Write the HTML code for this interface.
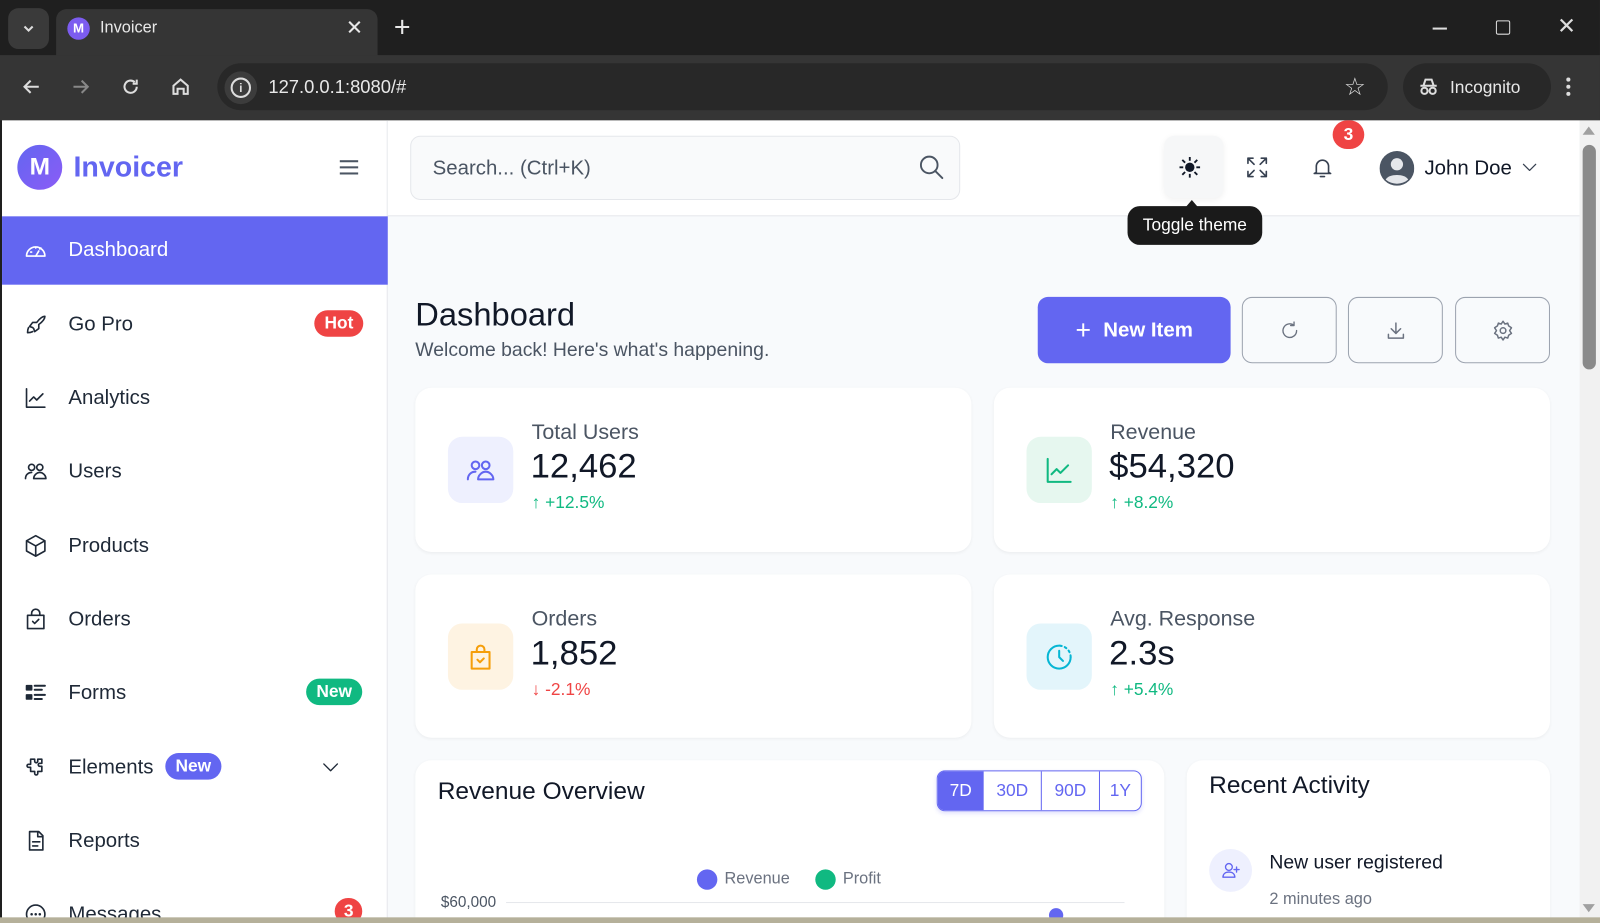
<!DOCTYPE html>
<html><head><meta charset="utf-8">
<style>
*{box-sizing:border-box;margin:0;padding:0}
html,body{width:1600px;height:919px;overflow:hidden;background:#f8fafc;font-family:"Liberation Sans",sans-serif}
#w{position:absolute;left:0;top:0;width:1568px;height:905px;transform:scale(1.0204);transform-origin:0 0;background:#1f1f1f;overflow:hidden}
.a{position:absolute}
.ic{stroke:currentColor;fill:none;stroke-width:1.6;stroke-linecap:round;stroke-linejoin:round}
.nav{position:absolute;left:2px;width:378px;height:60px;display:flex;align-items:center;font-size:20px;color:#1f2937}
.nav svg{position:absolute;left:21px;width:24px;height:24px}
.nav span.t{position:absolute;left:65px}
.badge{position:absolute;border-radius:14px;color:#fff;font-weight:bold;font-size:17px;padding:3px 10px}
.card{position:absolute;background:#fff;border-radius:16px;box-shadow:0 1px 3px rgba(0,0,0,.05)}
.ibox{position:absolute;left:32px;top:48px;width:64px;height:65px;border-radius:14px;display:flex;align-items:center;justify-content:center}
.lbl{position:absolute;left:114px;top:32px;font-size:21px;color:#4b5563}
.val{position:absolute;left:113px;top:58px;font-size:34px;color:#111827}
.chg{position:absolute;left:114px;top:103px;font-size:17px}
.ob{position:absolute;top:291px;width:93px;height:65px;border:1px solid #9ca3af;border-radius:10px;display:flex;align-items:center;justify-content:center;color:#6b7280}
</style></head><body><div id="w">
<div class="a" style="left:8px;top:8px;width:40px;height:40px;border-radius:10px;background:#3a3a3a"></div>
<svg class="a" style="left:20px;top:20px" width="16" height="16" viewBox="0 0 16 16"><path d="M4 6l4 4 4-4" stroke="#ddd" stroke-width="2" fill="none"/></svg>
<div class="a" style="left:55px;top:9px;width:315px;height:50px;background:#353535;border-radius:10px 10px 0 0"></div>
<div class="a" style="left:66px;top:17px;width:22px;height:22px;border-radius:50%;background:#7c5cf0;color:#fff;font-size:13px;font-weight:bold;text-align:center;line-height:22px">M</div>
<div class="a" style="left:98px;top:19px;color:#e8e8e8;font-size:16px">Invoicer</div>
<div class="a" style="left:339px;top:15px;color:#e8e8e8;font-size:20px">✕</div>
<div class="a" style="left:386px;top:11px;color:#e8e8e8;font-size:28px">+</div>
<div class="a" style="left:1404px;top:27px;width:14px;height:1.5px;background:#ddd"></div>
<div class="a" style="left:1466px;top:20px;width:14px;height:14px;border:1.5px solid #ddd;border-radius:2px"></div>
<div class="a" style="left:1526px;top:13px;color:#ddd;font-size:22px">✕</div>
<div class="a" style="left:0;top:54px;width:1568px;height:64px;background:#353535"></div>
<svg class="a" style="left:20px;top:74px" width="22" height="22" viewBox="0 0 22 22"><path d="M18 11H4M10 5l-6 6 6 6" stroke="#ddd" stroke-width="2" fill="none"/></svg>
<svg class="a" style="left:68px;top:74px" width="22" height="22" viewBox="0 0 22 22"><path d="M4 11h14M12 5l6 6-6 6" stroke="#888" stroke-width="2" fill="none"/></svg>
<svg class="a" style="left:117px;top:74px" width="22" height="22" viewBox="0 0 22 22"><path d="M17 11a6 6 0 1 1-2-4.5M17 4v4h-4" stroke="#ddd" stroke-width="2" fill="none"/></svg>
<svg class="a" style="left:166px;top:74px" width="22" height="22" viewBox="0 0 22 22"><path d="M4 10l7-6 7 6v8h-4v-5h-6v5H4z" stroke="#ddd" stroke-width="2" fill="none"/></svg>
<div class="a" style="left:213px;top:62px;width:1147px;height:46px;border-radius:23px;background:#282828"></div>
<div class="a" style="left:220px;top:70px;width:32px;height:32px;border-radius:50%;background:#3c3c3c"></div>
<div class="a" style="left:226px;top:76px;width:20px;height:20px;border-radius:50%;border:2px solid #ddd;color:#ddd;font-size:12px;font-weight:bold;text-align:center;line-height:16px">i</div>
<div class="a" style="left:263px;top:75px;color:#e8e8e8;font-size:18px">127.0.0.1:8080/#</div>
<div class="a" style="left:1317px;top:71px;color:#ddd;font-size:24px">☆</div>
<div class="a" style="left:1375px;top:62px;width:145px;height:46px;border-radius:23px;background:#282828"></div>
<svg class="a" style="left:1389px;top:74px" width="22" height="22" viewBox="0 0 22 22"><path d="M3 10h16M6 10l2-6h6l2 6" stroke="#ddd" stroke-width="2" fill="none"/><circle cx="7" cy="15" r="3" stroke="#ddd" stroke-width="2" fill="none"/><circle cx="15" cy="15" r="3" stroke="#ddd" stroke-width="2" fill="none"/></svg>
<div class="a" style="left:1421px;top:76px;color:#e8e8e8;font-size:17px">Incognito</div>
<div class="a" style="left:1535px;top:76px;width:4px;height:4px;background:#ddd;border-radius:2px;box-shadow:0 7px #ddd,0 14px #ddd"></div>
<div class="a" style="left:2px;top:118px;width:1566px;height:787px;background:#f8fafc"></div>
<div class="a" style="left:2px;top:118px;width:378px;height:787px;background:#fff;border-right:1px solid #e5e7eb"></div>
<div class="a" style="left:380px;top:118px;width:1168px;height:94px;background:#fff;border-bottom:1px solid #e5e7eb"></div>
<div class="a" style="left:1548px;top:118px;width:20px;height:787px;background:#f1f1f1"></div>
<div class="a" style="left:1551px;top:142px;width:13px;height:220px;background:#8a8a8a;border-radius:7px"></div>
<div class="a" style="left:1551px;top:124px;width:0;height:0;border:6px solid transparent;border-bottom:8px solid #a0a0a0;border-top:0"></div>
<div class="a" style="left:1551px;top:886px;width:0;height:0;border:6px solid transparent;border-top:8px solid #a0a0a0;border-bottom:0"></div>
<div class="a" style="left:17px;top:142px;width:44px;height:44px;border-radius:50%;background:linear-gradient(135deg,#6366f1,#8b5cf6);color:#fff;font-size:24px;font-weight:bold;text-align:center;line-height:44px">M</div>
<div class="a" style="left:72px;top:148px;font-size:28px;font-weight:bold;color:#6366f1">Invoicer</div>
<div class="a" style="left:333px;top:157px;width:18px;height:2px;background:#4b5563;box-shadow:0 6px #4b5563,0 12px #4b5563"></div>
<div class="nav" style="top:212px;height:67px;background:#6366f1;color:#fff"><svg class="ic" viewBox="0 0 24 24"><path d="M3 17a9 9 0 1 1 18 0zM12 17l3-5M7 13h1M12 8v1M16 10l1-1"/></svg><span class="t">Dashboard</span></div>
<div class="nav" style="top:288px"><svg class="ic" viewBox="0 0 24 24"><path d="M5 15c-1 2-1 4-1 5 1 0 3 0 5-1M9 15l-3-1 3-4h4c3-4 6-6 8-6 0 2-2 5-6 8v4l-4 3-1-3z"/></svg><span class="t">Go Pro</span><span class="badge" style="left:306px;top:16px;background:#ef4444">Hot</span></div>
<div class="nav" style="top:360px"><svg class="ic" viewBox="0 0 24 24"><path d="M3 3v18h18M6 15l4-4 3 3 6-6"/></svg><span class="t">Analytics</span></div>
<div class="nav" style="top:432px"><svg class="ic" viewBox="0 0 24 24"><circle cx="8" cy="8" r="3"/><circle cx="16" cy="8" r="3"/><path d="M2 19c0-4 3-6 6-6M10 19c0-3 3-6 6-6s6 3 6 6z"/></svg><span class="t">Users</span></div>
<div class="nav" style="top:505px"><svg class="ic" viewBox="0 0 24 24"><path d="M12 2l9 5v10l-9 5-9-5V7zM3 7l9 5 9-5M12 12v10"/></svg><span class="t">Products</span></div>
<div class="nav" style="top:577px"><svg class="ic" viewBox="0 0 24 24"><path d="M4 8h16v13H4zM8 8V6a4 4 0 0 1 8 0v2M9 14l2 2 4-4"/></svg><span class="t">Orders</span></div>
<div class="nav" style="top:649px"><svg class="ic" viewBox="0 0 24 24"><rect x="3" y="5" width="5" height="4" fill="#1f2937"/><rect x="3" y="14" width="5" height="4" fill="#1f2937"/><path d="M11 5h10M11 9h7M11 14h10M11 18h7" stroke-width="2"/></svg><span class="t">Forms</span><span class="badge" style="left:298px;top:16px;background:#10b981">New</span></div>
<div class="nav" style="top:722px"><svg class="ic" viewBox="0 0 24 24"><path d="M8 4h3v2a1.5 1.5 0 0 0 3 0V4h4v4h-2a1.5 1.5 0 0 0 0 3h2v5h-4v2a1.5 1.5 0 0 1-3 0v-2H7v-4H5a1.5 1.5 0 0 1 0-3h2V4z"/></svg><span class="t">Elements</span><span class="badge" style="left:160px;top:16px;background:#6366f1">New</span><svg class="ic" style="left:312px;width:20px" viewBox="0 0 24 24"><path d="M4 8l8 8 8-8"/></svg></div>
<div class="nav" style="top:794px"><svg class="ic" viewBox="0 0 24 24"><path d="M6 3h9l4 4v14H6zM14 3v5h5M9 13h7M9 17h5"/></svg><span class="t">Reports</span></div>
<div class="nav" style="top:866px"><svg class="ic" viewBox="0 0 24 24"><circle cx="12" cy="12" r="9"/><path d="M8 12h.01M12 12h.01M16 12h.01" stroke-width="2.5"/></svg><span class="t">Messages</span><span class="badge" style="left:326px;top:14px;background:#ef4444;padding:3px 9px">3</span></div>
<div class="a" style="left:402px;top:133px;width:539px;height:63px;background:#f9fafb;border:1px solid #e5e7eb;border-radius:10px"></div>
<div class="a" style="left:424px;top:154px;font-size:20px;color:#4b5563">Search... (Ctrl+K)</div>
<svg class="a ic" style="left:899px;top:150px;color:#4b5563" width="28" height="28" viewBox="0 0 24 24"><circle cx="10" cy="10" r="7"/><path d="M15 15l6 6"/></svg>
<div class="a" style="left:1141px;top:133px;width:58px;height:61px;background:#f6f7f8;border-radius:10px;box-shadow:0 2px 6px rgba(0,0,0,.06)"></div>
<svg class="a" style="left:1155px;top:153px" width="22" height="22" viewBox="0 0 24 24"><circle cx="12" cy="12" r="5" fill="#111827"/><path d="M12 1v4M12 19v4M1 12h4M19 12h4M4 4l3 3M17 17l3 3M4 20l3-3M17 7l3-3" stroke="#111827" stroke-width="2"/></svg>
<div class="a" style="left:1162px;top:196px;width:0;height:0;border:6px solid transparent;border-bottom:7px solid #1a1a1a;border-top:0"></div>
<div class="a" style="left:1105px;top:202px;width:132px;height:38px;background:#1a1a1a;border-radius:12px;color:#fff;font-size:17px;text-align:center;line-height:38px">Toggle theme</div>
<svg class="a ic" style="left:1220px;top:152px;color:#374151" width="24" height="24" viewBox="0 0 24 24"><path d="M3 8V3h5M3 3l6 6M21 8V3h-5M21 3l-6 6M3 16v5h5M3 21l6-6M21 16v5h-5M21 21l-6-6"/></svg>
<svg class="a ic" style="left:1284px;top:152px;color:#374151" width="24" height="24" viewBox="0 0 24 24"><path d="M6 17V11a6 6 0 0 1 12 0v6l2 1H4zM10 21h4"/></svg>
<div class="a" style="left:1306px;top:118px;width:31px;height:28px;border-radius:14px;background:#ef4444;color:#fff;font-weight:bold;font-size:17px;text-align:center;line-height:28px">3</div>
<svg class="a" style="left:1352px;top:148px" width="34" height="34" viewBox="0 0 34 34"><circle cx="17" cy="17" r="17" fill="#4b5563"/><circle cx="17" cy="13" r="6" fill="#e5e7eb"/><path d="M6 28c3-6 19-6 22 0a17 17 0 0 1-22 0z" fill="#e5e7eb"/></svg>
<div class="a" style="left:1396px;top:154px;font-size:20px;color:#111827">John Doe</div>
<svg class="a ic" style="left:1490px;top:155px;color:#374151" width="18" height="18" viewBox="0 0 24 24"><path d="M4 8l8 8 8-8"/></svg>
<div class="a" style="left:407px;top:290px;font-size:32px;color:#111827">Dashboard</div>
<div class="a" style="left:407px;top:333px;font-size:19px;color:#4b5563">Welcome back! Here's what's happening.</div>
<div class="a" style="left:1017px;top:291px;width:189px;height:65px;background:#6366f1;border-radius:10px;color:#fff;font-size:20px;font-weight:bold;line-height:65px;text-align:center"><span style="font-weight:normal;font-size:26px;vertical-align:-2px;margin-right:12px">+</span>New Item</div>
<div class="ob" style="left:1217px"><svg class="ic" width="20" height="20" viewBox="0 0 24 24"><path d="M20 12a8 8 0 1 1-3-6.2M17 2v4h-4"/></svg></div>
<div class="ob" style="left:1321px"><svg class="ic" width="22" height="22" viewBox="0 0 24 24"><path d="M12 4v11M7 10l5 5 5-5M4 16v4h16v-4"/></svg></div>
<div class="ob" style="left:1426px"><svg class="ic" width="22" height="22" viewBox="0 0 24 24"><circle cx="12" cy="12" r="3"/><path d="M12 2l2 3 3-1 1 3 3 2-2 3 2 3-3 2-1 3-3-1-2 3-2-3-3 1-1-3-3-2 2-3-2-3 3-2 1-3 3 1z"/></svg></div>
<div class="card" style="left:407px;top:380px;width:545px;height:161px"><div class="ibox" style="background:#eef0fe;color:#6366f1"><svg class="ic" width="30" height="30" viewBox="0 0 24 24"><circle cx="8" cy="8" r="3"/><circle cx="16" cy="8" r="3"/><path d="M2 19c0-4 3-6 6-6M10 19c0-3 3-6 6-6s6 3 6 6z"/></svg></div><div class="lbl">Total Users</div><div class="val">12,462</div><div class="chg" style="color:#10b981">↑ +12.5%</div></div>
<div class="card" style="left:974px;top:380px;width:545px;height:161px"><div class="ibox" style="background:#e6f7ef;color:#10b981"><svg class="ic" width="30" height="30" viewBox="0 0 24 24"><path d="M3 3v18h18M6 15l4-4 3 3 6-6"/></svg></div><div class="lbl">Revenue</div><div class="val">$54,320</div><div class="chg" style="color:#10b981">↑ +8.2%</div></div>
<div class="card" style="left:407px;top:563px;width:545px;height:160px"><div class="ibox" style="background:#fef3e2;color:#f59e0b"><svg class="ic" width="30" height="30" viewBox="0 0 24 24"><path d="M5 8h14v13H5zM9 8V6a3 3 0 0 1 6 0v2M9.5 14l2 2 3-3"/></svg></div><div class="lbl">Orders</div><div class="val">1,852</div><div class="chg" style="color:#ef4444">↓ -2.1%</div></div>
<div class="card" style="left:974px;top:563px;width:545px;height:160px"><div class="ibox" style="background:#e3f5fb;color:#06b6d4"><svg class="ic" width="30" height="30" viewBox="0 0 24 24"><path d="M12 3a9 9 0 1 0 9 9" /><path d="M21 12a9 9 0 0 0-9-9" stroke-dasharray="1.5 2.5"/><path d="M12 7v5l3 3"/></svg></div><div class="lbl">Avg. Response</div><div class="val">2.3s</div><div class="chg" style="color:#10b981">↑ +5.4%</div></div>
<div class="card" style="left:407px;top:745px;width:734px;height:200px"></div>
<div class="a" style="left:429px;top:762px;font-size:24px;color:#111827">Revenue Overview</div>
<div class="a" style="left:918px;top:755px;width:201px;height:40px;border:1px solid #6366f1;border-radius:8px;display:flex;overflow:hidden;font-size:17px;color:#6366f1;box-shadow:0 2px 4px rgba(99,102,241,.2)">
<div style="width:45px;background:#6366f1;color:#fff;text-align:center;line-height:38px">7D</div>
<div style="width:57px;text-align:center;line-height:38px;border-right:1px solid #6366f1">30D</div>
<div style="width:57px;text-align:center;line-height:38px;border-right:1px solid #6366f1">90D</div>
<div style="flex:1;text-align:center;line-height:38px">1Y</div></div>
<div class="a" style="left:683px;top:852px;width:20px;height:20px;border-radius:50%;background:#6366f1"></div>
<div class="a" style="left:710px;top:853px;font-size:16px;color:#6b7280">Revenue</div>
<div class="a" style="left:799px;top:852px;width:20px;height:20px;border-radius:50%;background:#10b981"></div>
<div class="a" style="left:826px;top:853px;font-size:16px;color:#6b7280">Profit</div>
<div class="a" style="left:432px;top:876px;font-size:15px;color:#4b5563">$60,000</div>
<div class="a" style="left:496px;top:884px;width:606px;height:1px;background:#e5e7eb"></div>
<div class="a" style="left:1028px;top:890px;width:14px;height:14px;border-radius:50%;background:#6366f1"></div>
<div class="card" style="left:1163px;top:745px;width:356px;height:200px"></div>
<div class="a" style="left:1185px;top:756px;font-size:24px;color:#111827">Recent Activity</div>
<div class="a" style="left:1185px;top:832px;width:42px;height:42px;border-radius:50%;background:#eef0fe"></div>
<svg class="a ic" style="left:1196px;top:843px;color:#6366f1" width="20" height="20" viewBox="0 0 24 24"><circle cx="10" cy="8" r="4"/><path d="M3 20c0-4 3-6 7-6s7 2 7 6zM19 8v6M16 11h6"/></svg>
<div class="a" style="left:1244px;top:835px;font-size:19px;color:#111827">New user registered</div>
<div class="a" style="left:1244px;top:873px;font-size:16px;color:#6b7280">2 minutes ago</div>
<div class="a" style="left:0;top:899px;width:1568px;height:6px;background:#b5b09a"></div>
</div></body></html>
